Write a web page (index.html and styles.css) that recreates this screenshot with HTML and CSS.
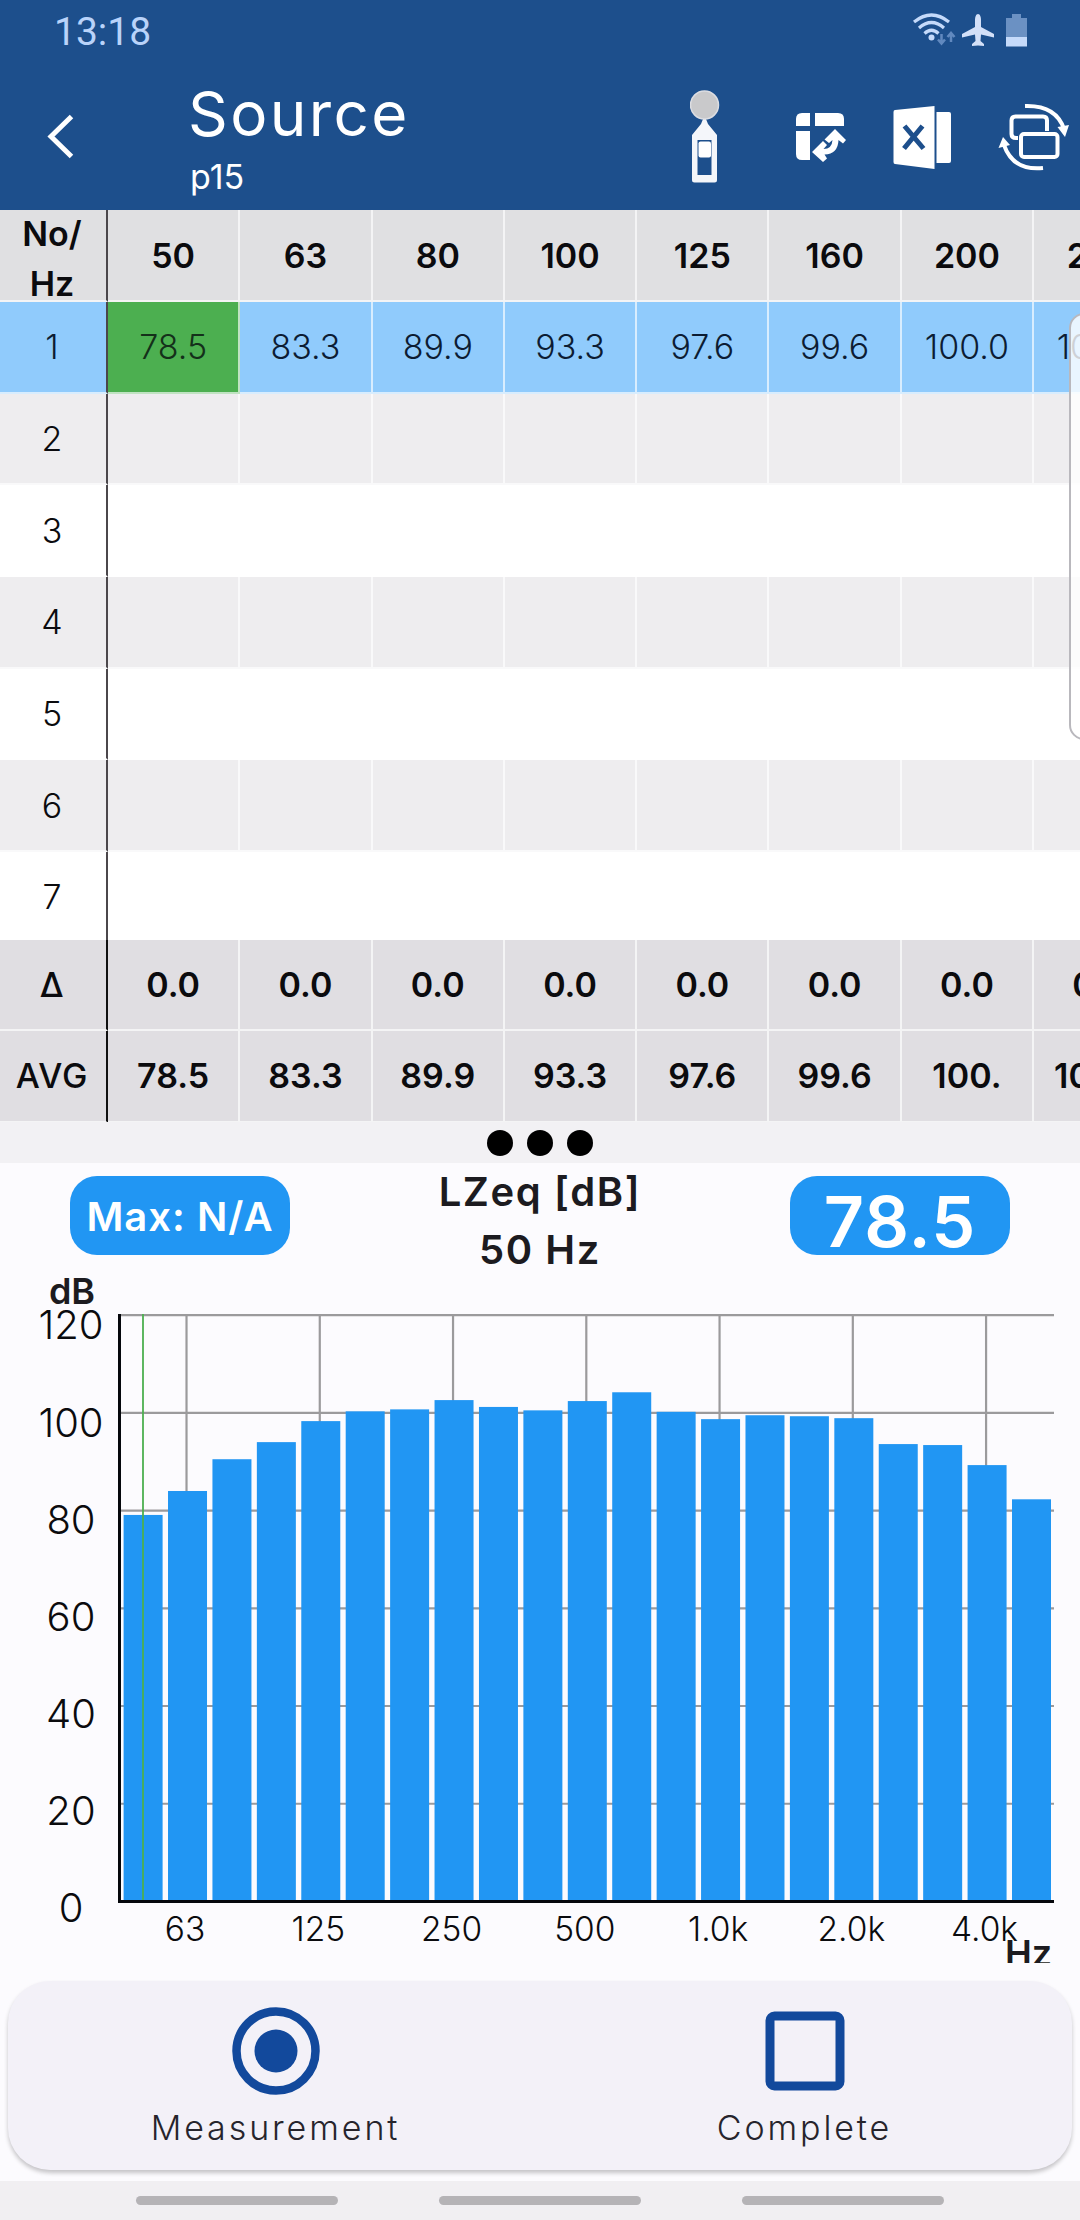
FILE: index.html
```html
<!DOCTYPE html>
<html lang="en">

<head>
    <meta charset="UTF-8">
    <meta name="viewport" content="width=device-width, initial-scale=1.0">
    <title>Source</title>
    <link rel="stylesheet" href="styles.css">
</head>

<body>
    <header class="header">
        <div class="status-bar">
            <span class="clock">13:18</span>
            <svg class="status-icons" width="116" height="36" viewBox="912 12 116 36">
                <g fill="none" stroke="#c5dafa" stroke-width="3.2">
                    <path d="M914 22Q931.500 8 949 22"/>
                    <path d="M919 28Q931.500 17 944 28"/>
                    <path d="M924.500 33.500Q931.500 27 938.500 33.500"/>
                </g>
                <circle cx="931.500" cy="37.500" r="3" fill="#c5dafa"/>
                <path d="M941.500 34V43M938 39.500L941.500 43.500L945 39.500M951 42V33M947.500 37L951 33L954.500 37" fill="none" stroke="#6189bf" stroke-width="2.500"/>
                <path d="M978 14C980 14 981 17 981 20V27L994 34V37.500L981 34.500L980.500 41L984 44V46L978 45.500L972 46V44L975.500 41L975 34.500L962 37.500V34L975 27V20C975 17 976 14 978 14Z" fill="#d3e0f8"/>
                <path d="M1012 14H1021V18H1027V37H1006V18H1012Z" fill="#6b91c3"/>
                <path d="M1006 37H1027V46.500H1006Z" fill="#c5dafa"/>
            </svg>
        </div>
        <div class="app-bar">
            <svg class="back" width="30" height="46" viewBox="45 114 30 46">
                <path d="M71.500 116.500L51 136.500L71.500 156.500" fill="none" stroke="#fff" stroke-width="5"/>
            </svg>
            <div class="titles">
                <h1>Source</h1>
                <p>p15</p>
            </div>
            <div class="actions">
                <svg width="30" height="94" viewBox="690 90 30 94">
                    <path d="M703 119H706L708 124L717 135V180Q717 182.500 714.500 182.500H694.500Q692 182.500 692 180V135L701 124Z" fill="#f4f6fa"/>
                    <rect x="697.500" y="140" width="14" height="35" fill="#1d4f8c"/>
                    <rect x="698.500" y="141.500" width="12.500" height="16" rx="2" fill="#fff"/>
                    <circle cx="704.500" cy="105" r="14" fill="#c9c9cb" stroke="#dcdde2" stroke-width="1.500"/>
                </svg>
                <svg class="swap-icon" width="52" height="52" viewBox="795 111 52 52">
                    <g fill="#fff">
                        <path d="M802 113H810V126H796V119Q796 113 802 113Z"/>
                        <path d="M815 113H838Q844 113 844 119V126H815Z"/>
                        <path d="M796 131H810V160H802Q796 160 796 154Z"/>
                        <path d="M835 129L846 140L843 143.500L838.500 140Q838 154 824.500 154.500L827 158.500L823 162L812 152L823 141L827 145L823.500 149Q832 149 832.500 140L829 143L824.500 139.500Z"/>
                    </g>
                </svg>
                <svg class="excel-icon" width="60" height="66" viewBox="892 103 60 66">
                    <path d="M895 109L934.500 105V168L895 163Q893.500 163 893.500 161V111Q893.500 109 895 109Z" fill="#fff"/>
                    <path d="M936.500 111H949Q951 111 951 113V160Q951 162 949 162H936.500Z" fill="#fff"/>
                    <path d="M904.500 125L923.500 147.500M922.500 125L904 147.500" stroke="#1d4f8c" stroke-width="5" fill="none"/>
                </svg>
                <svg class="rotate-icon" width="72" height="72" viewBox="998 101 72 72">
                    <g fill="none" stroke="#fff" stroke-width="4">
                        <path d="M1018 138H1016Q1011.500 138 1011.500 134V120.500Q1011.500 116.500 1015.500 116.500H1043Q1047 116.500 1047 120.500V131"/>
                        <rect x="1021" y="134" width="36.500" height="23" rx="3"/>
                        <path d="M1025 106Q1056 105 1064 129"/>
                        <path d="M1043 168Q1013 171 1004 145"/>
                    </g>
                    <path d="M1057.500 127L1069 125L1065 137ZM998.500 148L1003 137L1010 145Z" fill="#fff"/>
                </svg>
            </div>
        </div>
    </header>

    <main>
        <div class="grid">
            <div class="row row-head">
                <div class="no">No/<br>Hz</div><div>50</div><div>63</div><div>80</div><div>100</div><div>125</div><div>160</div><div>200</div><div>250</div>
            </div>
            <div class="grid-body">
                <div class="row selected">
                    <div>1</div><div class="current">78.5</div><div>83.3</div><div>89.9</div><div>93.3</div><div>97.6</div><div>99.6</div><div>100.0</div><div>102.0</div>
                </div>
                <div class="row even"><div>2</div><div></div><div></div><div></div><div></div><div></div><div></div><div></div><div></div></div>
                <div class="row"><div>3</div><div></div><div></div><div></div><div></div><div></div><div></div><div></div><div></div></div>
                <div class="row even"><div>4</div><div></div><div></div><div></div><div></div><div></div><div></div><div></div><div></div></div>
                <div class="row"><div>5</div><div></div><div></div><div></div><div></div><div></div><div></div><div></div><div></div></div>
                <div class="row even"><div>6</div><div></div><div></div><div></div><div></div><div></div><div></div><div></div><div></div></div>
                <div class="row"><div>7</div><div></div><div></div><div></div><div></div><div></div><div></div><div></div><div></div></div>
            </div>
            <div class="row row-sum">
                <div>Δ</div><div>0.0</div><div>0.0</div><div>0.0</div><div>0.0</div><div>0.0</div><div>0.0</div><div>0.0</div><div>0.0</div>
            </div>
            <div class="row row-sum">
                <div>AVG</div><div>78.5</div><div>83.3</div><div>89.9</div><div>93.3</div><div>97.6</div><div>99.6</div><div>100.</div><div>102.0</div>
            </div>
            <div class="scroll-handle"></div>
        </div>

        <div class="splitter"><i></i><i></i><i></i></div>

        <section class="spectrum">
            <div class="spectrum-head">
                <div class="pill">Max: N/A</div>
                <div class="spectrum-title">LZeq [dB]<br>50 Hz</div>
                <div class="pill pill-value">78.5</div>
            </div>
            <svg id="chart" width="1080" height="710" viewBox="0 1270 1080 710"></svg>
        </section>

        <nav class="controls">
            <div class="control">
                <svg width="88" height="88" viewBox="0 0 88 88">
                    <circle cx="44" cy="44" r="39.500" fill="none" stroke="#12499c" stroke-width="8.500"/>
                    <circle cx="44" cy="44" r="21.500" fill="#12499c"/>
                </svg>
                <span>Measurement</span>
            </div>
            <div class="control">
                <svg width="88" height="88" viewBox="0 0 88 88">
                    <rect x="9" y="9" width="70" height="70" rx="4.500" fill="none" stroke="#12499c" stroke-width="9"/>
                </svg>
                <span>Complete</span>
            </div>
        </nav>
    </main>

    <footer class="nav-hints"><i></i><i></i><i></i></footer>

    <script>
        var levels = [79.1, 84, 90.5, 94, 98.3, 100.3, 100.7, 102.6, 101.2, 100.5, 102.4, 104.2, 100.2, 98.7, 99.5, 99.3, 98.9, 93.6, 93.4, 89.3, 82.3];
        var labels = ['63', '125', '250', '500', '1.0k', '2.0k', '4.0k'];
        var zero = 1901.5, perDb = 4.887, step = 44.42, left = 123.6;
        var svg = '';

        // horizontal grid and level labels
        for (var db = 0; db <= 120; db += 20) {
            var y = zero - db * perDb;
            if (db > 0) {
                svg += '<line class="grid-line" x1="120" x2="1054" y1="' + y + '" y2="' + y + '"/>';
            }
            svg += '<text class="y-label" x="71" y="' + (1922 - db * 4.855) + '">' + db + '</text>';
        }

        // octave lines
        labels.forEach(function (label, i) {
            var x = left + 18.5 + step * (1 + i * 3);
            svg += '<line class="grid-line" x1="' + x + '" x2="' + x + '" y1="1315" y2="1900"/>';
            svg += '<text class="x-label" x="' + (x - 1.5) + '" y="1941">' + label + '</text>';
        });

        levels.forEach(function (level, i) {
            var h = level * perDb;
            svg += '<rect class="bar" x="' + (left + i * step) + '" y="' + (zero - h) + '" width="39" height="' + h + '"/>';
        });

        svg += '<line class="cursor" x1="143" x2="143" y1="1314" y2="1900"/>';
        svg += '<path class="axis" d="M119.500 1314V1901.500H1054"/>';
        svg += '<text class="unit" x="72" y="1304">dB</text>';
        svg += '<clipPath id="unitClip"><rect x="1000" y="1930" width="80" height="33"/></clipPath>';
        svg += '<text class="unit" x="1028.500" y="1965.500" clip-path="url(#unitClip)">Hz</text>';

        document.getElementById('chart').innerHTML = svg;
    </script>
</body>

</html>
```
FILE: styles.css
```css
* {
    box-sizing: border-box;
}

body {
    margin: 0;
    width: 1080px;
    height: 2220px;
    overflow: hidden;
    display: flex;
    flex-direction: column;
    background: #fcfbfe;
    color: #0b0b0e;
    font-family: Inter, "Liberation Sans", sans-serif;
    font-size: 34px;
}

svg {
    display: block;
    flex: none;
}

/* header */
.header {
    height: 210px;
    flex: none;
    background: #1d4f8c;
    color: #fff;
}

.status-bar {
    height: 64px;
    padding: 0 52px 0 54px;
    display: flex;
    align-items: center;
    justify-content: space-between;
}

.clock {
    font-family: Roboto, sans-serif;
    font-size: 39px;
    color: #b9d3fa;
}

.status-icons {
    margin-top: -4px;
}

.app-bar {
    height: 146px;
    padding: 0 10px 0 45px;
    display: flex;
    align-items: center;
}

.titles {
    align-self: flex-start;
    margin: 15px 0 0 113px;
}

.titles h1 {
    margin: 0;
    font-size: 62px;
    font-weight: 400;
    line-height: 70px;
    letter-spacing: 2.4px;
}

.titles p {
    margin: 0;
    padding-left: 2px;
    line-height: 56px;
}

.actions {
    margin-left: auto;
    display: flex;
    align-items: center;
}

.swap-icon {
    margin-left: 75px;
}

.excel-icon {
    margin-left: 45px;
}

.rotate-icon {
    margin-left: 46px;
}

/* measurement table */
.grid {
    position: relative;
    height: 912px;
    overflow: hidden;
}

.row {
    display: grid;
    grid-template-columns: 108px repeat(8, 132.3px);
    grid-template-rows: 100%;
    height: 91.7px;
    background: #fff;
    font-weight: 300;
}

.row div {
    display: flex;
    align-items: center;
    justify-content: center;
    border-right: 2px solid rgba(255, 255, 255, 0.65);
    border-bottom: 2px solid rgba(255, 255, 255, 0.65);
}

.row div:first-child {
    border-right: 2px solid #4b474b;
    padding-right: 2px;
}

.grid-body {
    height: 637.5px;
    overflow: hidden;
}

.row-head {
    height: 92px;
    background: #e0e0e2;
    font-weight: 600;
}

.row-head .no {
    padding-top: 8px;
    line-height: 50px;
    text-align: center;
}

.row-sum {
    height: 91.500px;
    background: #e0dee2;
    font-weight: 600;
}

.row-sum div:first-child {
    border-right-color: #111;
    font-weight: 500;
    letter-spacing: 0.8px;
}

.even {
    background: #eeedef;
}

.selected {
    background: #90cbfc;
    color: #0c1c33;
}

.selected .current {
    background: #4caf50;
    color: #14301a;
}

.scroll-handle {
    position: absolute;
    left: 1069px;
    top: 103px;
    width: 30px;
    height: 427px;
    border: 2px solid #b9b8bd;
    border-radius: 18px;
    background: rgba(255, 255, 255, 0.8);
}

.splitter {
    height: 41px;
    display: flex;
    align-items: center;
    justify-content: center;
    gap: 14px;
    background: #f2f1f4;
}

.splitter i {
    width: 26px;
    height: 26px;
    border-radius: 50%;
    background: #000;
}

/* spectrum */
.spectrum-head {
    height: 107px;
    padding: 0 70px;
    display: flex;
    justify-content: space-between;
    align-items: flex-start;
}

.pill {
    width: 220px;
    height: 79px;
    margin-top: 13px;
    border-radius: 27px;
    background: #2196f3;
    color: #fff;
    font-size: 40px;
    font-weight: 600;
    line-height: 81px;
    text-align: center;
    letter-spacing: 1px;
}

.pill-value {
    font-size: 70px;
    line-height: 92px;
}

.spectrum-title {
    color: #1c1b20;
    font-size: 40px;
    font-weight: 600;
    line-height: 58px;
    letter-spacing: 1.6px;
    text-align: center;
}

#chart text {
    text-anchor: middle;
    fill: #0b0b0e;
    font-weight: 300;
}

#chart .y-label {
    font-size: 40px;
}

#chart .x-label {
    font-size: 33.500px;
}

#chart .unit {
    font-size: 36px;
    font-weight: 600;
    fill: #1c1b20;
}

.grid-line {
    stroke: #9b9a9c;
    stroke-width: 2.200;
}

.bar {
    fill: #2196f3;
}

.cursor {
    stroke: #4caf50;
    stroke-width: 1.800;
}

.axis {
    fill: none;
    stroke: #05070c;
    stroke-width: 3;
}

/* bottom controls */
.controls {
    height: 189px;
    margin: 1px 8px 0;
    padding: 26px 0 0 3px;
    display: flex;
    border-radius: 42px;
    background: #f3f1f8;
    box-shadow: 0 3px 4px rgba(0, 0, 0, 0.22);
}

.control {
    width: 529px;
    display: flex;
    flex-direction: column;
    align-items: center;
    color: #26242c;
    font-weight: 300;
}

.control span {
    margin-top: 8px;
    line-height: 50px;
    letter-spacing: 2.900px;
}

.nav-hints {
    height: 39px;
    margin-top: auto;
    padding: 15px 136px 0;
    display: flex;
    justify-content: space-between;
    background: #f1eff2;
}

.nav-hints i {
    width: 202px;
    height: 9px;
    border-radius: 5px;
    background: #b5b3b6;
}
```
